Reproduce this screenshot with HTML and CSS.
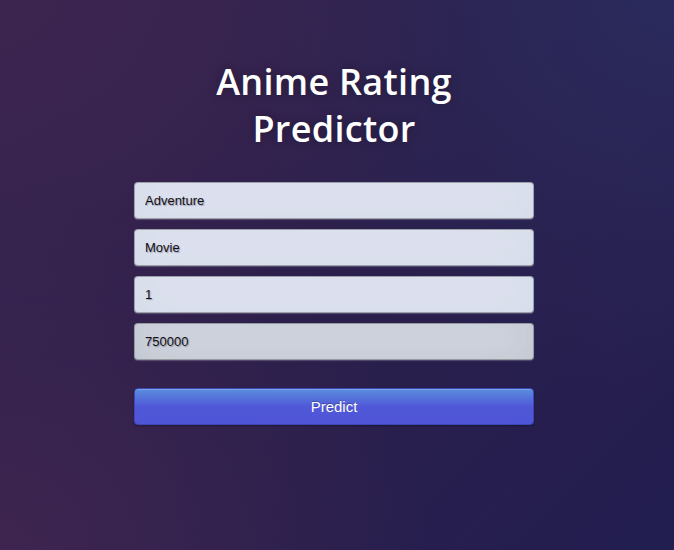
FILE: index.html
```
<!DOCTYPE html>
<html>
<head>
<meta charset="utf-8">
<link rel="stylesheet" href="styles.css">
</head>
<body>
<div class="login">
  <h1 class="title">Anime Rating Predictor</h1>
  <form class="form">
    <input class="field" type="text" value="Adventure">
    <input class="field" type="text" value="Movie">
    <input class="field" type="text" value="1">
    <input class="field field-alt" type="text" value="750000">
    <button class="btn" type="button">Predict</button>
  </form>
</div>
</body>
</html>
```
FILE: styles.css
```
html, body {
  margin: 0;
  height: 100%;
}
body {
  background:
    radial-gradient(ellipse at 0% 100%, rgba(64, 38, 80, 0.9) 0%, rgba(64, 38, 80, 0) 45%),
    radial-gradient(ellipse at 0% 0%, rgba(62, 38, 80, 0.9) 0%, rgba(62, 38, 80, 0) 50%),
    radial-gradient(ellipse at 100% 0%, rgba(42, 42, 92, 1) 0%, rgba(42, 42, 92, 0) 50%),
    linear-gradient(135deg, #34224e 0%, #2c1f4b 45%, #221e50 100%);
  font-family: "Liberation Sans", Arial, sans-serif;
  overflow: hidden;
}
.login {
  width: 400px;
  margin-left: calc(50% - 203px);
  padding-top: 58px;
}
.title {
  margin: 0 0 30px;
  font-family: "Open Sans", sans-serif;
  font-weight: 600;
  font-size: 36px;
  line-height: 47px;
  letter-spacing: 0.3px;
  color: #fff;
  text-align: center;
  text-shadow: 0 0 10px rgba(0, 0, 0, 0.3);
  padding: 0 70px;
}
.form {
  display: flex;
  flex-direction: column;
}
.field {
  box-sizing: border-box;
  width: 100%;
  height: 37px;
  margin: 0 0 10px;
  padding: 0 10px;
  font-family: "Liberation Sans", Arial, sans-serif;
  font-size: 13px;
  color: #111;
  text-shadow: 1px 1px 1px rgba(40, 40, 90, 0.35);
  background: #e0e5f3;
  border: 1px solid rgba(0, 0, 0, 0.3);
  border-radius: 4px;
  box-shadow: inset 0 -5px 45px rgba(100, 100, 120, 0.08), 0 1px 1px rgba(255, 255, 255, 0.2);
  outline: none;
}
.field-alt {
  background: #d6dbe6;
  box-shadow: inset 0 -5px 45px rgba(100, 100, 100, 0.18), 0 1px 1px rgba(255, 255, 255, 0.2);
}
.btn {
  margin-top: 18px;
  width: 100%;
  height: 37px;
  font-family: "Liberation Sans", Arial, sans-serif;
  font-size: 15px;
  color: #fff;
  text-shadow: 0 -1px 0 rgba(0, 0, 0, 0.25);
  background: linear-gradient(to bottom, #5a8ede 0%, #5058d8 50%, #4f55d6 100%);
  border: 1px solid #3c48b8;
  border-radius: 4px;
  box-shadow: inset 0 1px 0 rgba(255, 255, 255, 0.2), 0 1px 2px rgba(0, 0, 0, 0.3);
  cursor: pointer;
}
```
